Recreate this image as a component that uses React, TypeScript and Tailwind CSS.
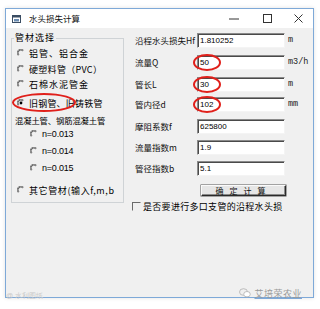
import React from "react";

const CJK = { fontFamily: '"Noto Sans CJK SC", "Noto Sans", sans-serif' };

function Radio({ checked = false }: { checked?: boolean }) {
  return (
    <svg width="8" height="8" viewBox="0 0 8 8" className="shrink-0">
      <path d="M6.6 1.2 A3.6 3.6 0 0 0 1.2 6.6" fill="none" stroke="#7a7a7a" strokeWidth="1" />
      <path d="M5.9 1.9 A2.6 2.6 0 0 0 1.9 5.9" fill="none" stroke="#404040" strokeWidth="0.8" />
      {checked && <circle cx="4" cy="4" r="1.4" fill="#000" />}
    </svg>
  );
}

function Ellipse({ className }: { className: string }) {
  return (
    <div
      className={`pointer-events-none absolute rounded-[50%] border-2 border-[#e0201b] ${className}`}
    />
  );
}

function RadioRow({
  label,
  checked,
  mt,
  indent = false,
  tracking = "tracking-[1px]",
  children,
}: {
  label: string;
  checked?: boolean;
  mt: string;
  indent?: boolean;
  tracking?: string;
  children?: React.ReactNode;
}) {
  return (
    <div className={`relative flex h-[14px] items-center ${mt} ${indent ? "pl-[18px]" : "pl-[5px]"}`}>
      <Radio checked={checked} />
      <span
        className={`ml-[4px] whitespace-nowrap text-[9px] leading-none text-black ${tracking}`}
        style={indent ? { fontFamily: '"Liberation Sans", sans-serif' } : CJK}
      >
        {label}
      </span>
      {children}
    </div>
  );
}

function Field({
  label,
  value,
  unit,
  mt,
  circled,
}: {
  label: string;
  value: string;
  unit?: string;
  mt: string;
  circled?: boolean;
}) {
  return (
    <div className={`flex h-[15px] items-center ${mt}`}>
      <div
        className="w-[65px] whitespace-nowrap pl-[3px] text-[8.5px] leading-none text-[#111]"
        style={CJK}
      >
        {label}
      </div>
      <div className="relative flex h-[15px] w-[88px] items-center border border-b-[#f4f4f4] border-l-[#8a8a8a] border-r-[#f4f4f4] border-t-[#8a8a8a] bg-white pl-[2px] shadow-[inset_1px_1px_0_#4a4a4a]">
        <span
          className="text-[8px] leading-none text-black"
          style={{ fontFamily: '"Liberation Sans", Arial, sans-serif' }}
        >
          {value}
        </span>
        {circled && <Ellipse className="-left-[5px] -top-[2px] h-[17px] w-[28px]" />}
      </div>
      {unit && (
        <span
          className="ml-[3px] text-[8.5px] leading-none text-[#222]"
          style={{ fontFamily: '"Liberation Mono", "Courier New", monospace' }}
        >
          {unit}
        </span>
      )}
    </div>
  );
}

export default function App() {
  return (
    <div className="relative h-[309px] w-[320px] overflow-hidden bg-white pl-[5px] pt-[8px]">
      <div className="flex h-[290px] w-[309px] flex-col border border-[#7ea9d8] bg-[#f0f0f0] shadow-[0_0_4px_rgba(0,0,0,0.12)]">
        {/* Title bar */}
        <div className="flex h-[19px] items-center bg-white">
          <svg width="9" height="8" viewBox="0 0 9 8" className="ml-[6px] shrink-0">
            <rect x="0.5" y="0.5" width="8" height="7" fill="#fff" stroke="#3a4d63" />
            <rect x="0.5" y="0.5" width="8" height="2" fill="#3a4d63" />
            <rect x="2" y="4" width="5" height="2.5" fill="#6a8bb0" />
          </svg>
          <span className="ml-[8px] text-[8.5px] leading-none text-[#111]" style={CJK}>
            水头损失计算
          </span>
          <div className="ml-auto flex h-full">
            <div className="flex w-[34px] items-center justify-center">
              <svg width="10" height="2" viewBox="0 0 10 2">
                <line x1="0" y1="1" x2="10" y2="1" stroke="#333" strokeWidth="1" />
              </svg>
            </div>
            <div className="flex w-[32px] items-center justify-center">
              <svg width="9" height="9" viewBox="0 0 9 9">
                <rect x="0.5" y="0.5" width="8" height="8" fill="none" stroke="#333" strokeWidth="1" />
              </svg>
            </div>
            <div className="flex w-[30px] items-center justify-center">
              <svg width="9" height="9" viewBox="0 0 9 9">
                <path d="M0.5 0.5 L8.5 8.5 M8.5 0.5 L0.5 8.5" stroke="#333" strokeWidth="1" />
              </svg>
            </div>
          </div>
        </div>

        {/* Body */}
        <div className="flex flex-1 items-start">
          {/* Group box */}
          <fieldset className="ml-[5px] mt-[4px] h-[171px] w-[113px] border border-[#cfd3d6]">
            <legend
              className="ml-[2px] px-[1px] text-[9px] leading-[12px] tracking-[1px] text-black"
              style={CJK}
            >
              管材选择
            </legend>
            <RadioRow label="铝管、铝合金" mt="mt-[2px]" />
            <RadioRow label="硬塑料管（PVC）" mt="mt-[2px]" tracking="tracking-[0.3px]" />
            <RadioRow label="石棉水泥管金" mt="mt-[1px]" />
            <RadioRow label="旧钢管、旧铸铁管" checked mt="mt-[5px]" tracking="tracking-[0.2px]">
              <Ellipse className="left-[0px] -top-[3px] h-[19px] w-[64px]" />
            </RadioRow>
            <div
              className="mt-[3px] flex h-[14px] items-center whitespace-nowrap pl-[3px] text-[8.3px] leading-none tracking-[-0.1px] text-black"
              style={CJK}
            >
              混凝土管、钢筋混凝土管
            </div>
            <RadioRow label="n=0.013" mt="mt-[0px]" indent tracking="tracking-[-0.2px]" />
            <RadioRow label="n=0.014" mt="mt-[3px]" indent tracking="tracking-[-0.2px]" />
            <RadioRow label="n=0.015" mt="mt-[3px]" indent tracking="tracking-[-0.2px]" />
            <RadioRow label="其它管材(输入f,m,b" mt="mt-[8px]" tracking="tracking-[0.6px]" />
          </fieldset>

          {/* Right column */}
          <div className="ml-[8px] flex flex-col">
            <Field label="沿程水头损失Hf" value="1.810252" unit="m" mt="mt-[5px]" />
            <Field label="流量Q" value="50" unit="m3/h" mt="mt-[7px]" circled />
            <Field label="管长L" value="30" unit="m" mt="mt-[7px]" circled />
            <Field label="管内径d" value="102" unit="mm" mt="mt-[5px]" circled />
            <Field label="摩阻系数f" value="625800" mt="mt-[7px]" />
            <Field label="流量指数m" value="1.9" mt="mt-[6px]" />
            <Field label="管径指数b" value="5.1" mt="mt-[6px]" />
            <div className="ml-[69px] mt-[9px] flex h-[11px] w-[85px] items-center justify-center border border-b-[#2a2a2a] border-l-[#fafafa] border-r-[#2a2a2a] border-t-[#fafafa] bg-[#e6e6e6] shadow-[inset_-1px_-1px_0_#8a8a8a,0_0_0_0.5px_#555]">
              <span className="text-[8px] leading-none tracking-[6px] text-[#111]" style={CJK}>
                确定计算
              </span>
            </div>
            <div className="mt-[5px] flex h-[10px] items-center">
              <div className="h-[9px] w-[9px] shrink-0 border border-b-[#f0f0f0] border-l-[#6a6a6a] border-r-[#f0f0f0] border-t-[#6a6a6a] bg-[#f0f0f0]" />
              <span
                className="ml-[2px] whitespace-nowrap text-[9px] leading-none tracking-[0.3px] text-black"
                style={CJK}
              >
                是否要进行多口支管的沿程水头损
              </span>
            </div>
          </div>
        </div>
      </div>

      {/* Watermarks */}
      <div className="absolute bottom-[11px] right-[18px] flex items-center gap-[3px] text-[#9a9a9a]">
        <svg width="12" height="10" viewBox="0 0 12 10">
          <ellipse cx="4.5" cy="4" rx="4" ry="3.3" fill="none" stroke="#b0b0b0" strokeWidth="0.8" />
          <ellipse cx="8" cy="6.2" rx="3.3" ry="2.7" fill="#fff" stroke="#b0b0b0" strokeWidth="0.8" />
        </svg>
        <span className="text-[9px] leading-none tracking-[0.5px] underline decoration-[#7ea9d8]" style={CJK}>
          艾培荣农业
        </span>
      </div>
      <div
        className="absolute bottom-[10px] left-[6px] text-[7px] leading-none text-[#c8c8c8]"
        style={{ fontFamily: '"Liberation Sans", sans-serif' }}
      >
        @ 水利图纸
      </div>
    </div>
  );
}
